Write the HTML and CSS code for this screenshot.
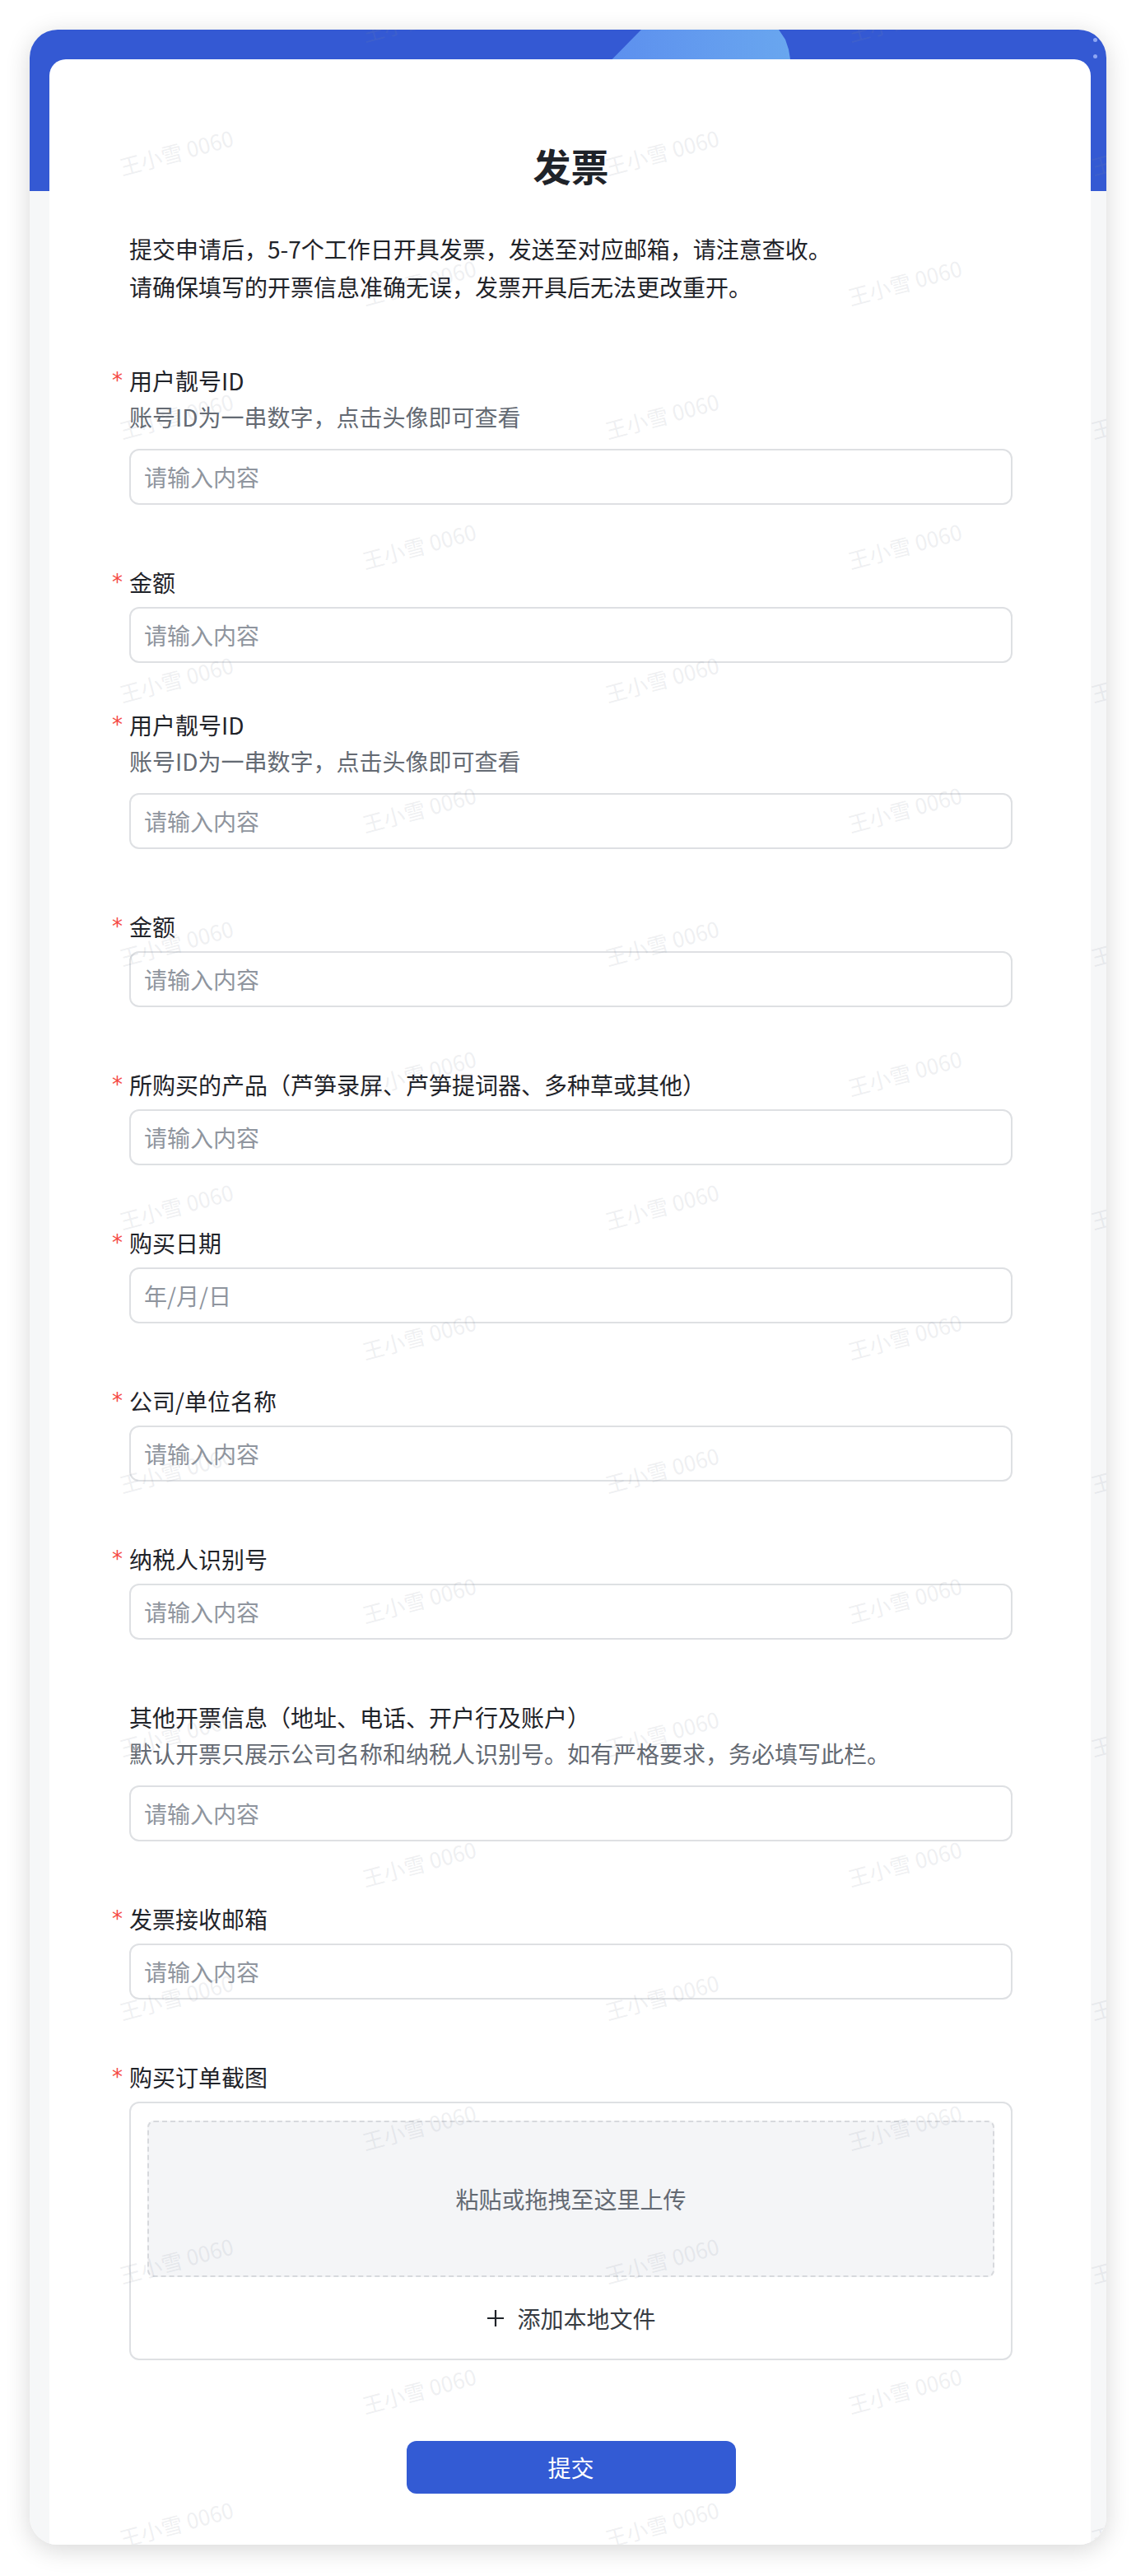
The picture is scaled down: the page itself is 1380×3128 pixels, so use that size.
FILE: index.html
```html
<!DOCTYPE html>
<html lang="zh-CN">
<head>
    <meta charset="UTF-8">
    <meta name="viewport" content="width=device-width, initial-scale=1.0">
    <title>发票</title>
    <link rel="stylesheet" href="styles.css">
</head>
<body>
    <div class="frame">
        <span class="head-shape"></span>
        <span class="scroll-dots"><i></i><i></i></span>

        <main class="card">
            <h1>发票</h1>
            <p class="intro">提交申请后，5-7个工作日开具发票，发送至对应邮箱，请注意查收。<br>请确保填写的开票信息准确无误，发票开具后无法更改重开。</p>

            <form class="form" onsubmit="return false">
                <div class="field">
                    <label class="label req">用户靓号ID</label>
                    <p class="hint">账号ID为一串数字，点击头像即可查看</p>
                    <input class="input" type="text" placeholder="请输入内容">
                </div>
                <div class="field">
                    <label class="label req">金额</label>
                    <input class="input" type="text" placeholder="请输入内容">
                </div>
                <div class="field tight">
                    <label class="label req">用户靓号ID</label>
                    <p class="hint">账号ID为一串数字，点击头像即可查看</p>
                    <input class="input" type="text" placeholder="请输入内容">
                </div>
                <div class="field">
                    <label class="label req">金额</label>
                    <input class="input" type="text" placeholder="请输入内容">
                </div>
                <div class="field">
                    <label class="label req">所购买的产品（芦笋录屏、芦笋提词器、多种草或其他）</label>
                    <input class="input" type="text" placeholder="请输入内容">
                </div>
                <div class="field">
                    <label class="label req">购买日期</label>
                    <input class="input" type="text" placeholder="年/月/日">
                </div>
                <div class="field">
                    <label class="label req">公司/单位名称</label>
                    <input class="input" type="text" placeholder="请输入内容">
                </div>
                <div class="field">
                    <label class="label req">纳税人识别号</label>
                    <input class="input" type="text" placeholder="请输入内容">
                </div>
                <div class="field">
                    <label class="label">其他开票信息（地址、电话、开户行及账户）</label>
                    <p class="hint">默认开票只展示公司名称和纳税人识别号。如有严格要求，务必填写此栏。</p>
                    <input class="input" type="text" placeholder="请输入内容">
                </div>
                <div class="field">
                    <label class="label req">发票接收邮箱</label>
                    <input class="input" type="text" placeholder="请输入内容">
                </div>
                <div class="field">
                    <label class="label req">购买订单截图</label>
                    <div class="upload">
                        <div class="drop-zone">粘贴或拖拽至这里上传</div>
                        <div class="add-file">
                            <svg width="24" height="24" viewBox="0 0 24 24"><path d="M12 2v20M2 12h20" stroke="#1f2329" stroke-width="2.2" fill="none"/></svg>
                            添加本地文件
                        </div>
                    </div>
                </div>

                <button class="submit" type="submit">提交</button>
            </form>
        </main>

        <!-- 水印层 -->
        <svg class="watermark" aria-hidden="true"></svg>
    </div>

    <script>
        // 水印：交错排列，列距 295，行距 320
        const wm = document.querySelector('.watermark');
        const ns = 'http://www.w3.org/2000/svg';
        for (let col = 0; col < 5; col++) {
            const x = 178 + col * 295;
            const start = col % 2 ? -14 : 148;
            for (let y = start; y < 3200; y += 320) {
                const t = document.createElementNS(ns, 'text');
                t.setAttribute('x', x);
                t.setAttribute('y', y);
                t.setAttribute('transform', `rotate(-15 ${x} ${y})`);
                t.textContent = '王小雪 0060';
                wm.appendChild(t);
            }
        }
    </script>
</body>
</html>
```

FILE: styles.css
```css
body {
    margin: 0;
    background: #fff;
    font-family: "Noto Sans CJK SC", "Noto Sans", sans-serif;
    color: #1f2329;
}
.frame {
    position: relative;
    width: 1308px;
    margin: 36px auto;
    padding: 36px 19px 0 24px;
    box-sizing: border-box;
    border-radius: 34px;
    overflow: hidden;
    background: linear-gradient(to bottom, #3459d3 196px, #f6f7f8 196px);
    box-shadow: 0 6px 30px rgba(0,0,0,0.16);
}
.head-shape {
    position: absolute;
    left: 680px;
    top: 0;
    width: 260px;
    height: 60px;
    background: linear-gradient(90deg, #5b8dee 0%, #6aa8ef 100%);
    clip-path: polygon(63px 0, 230px 0, 238px 12px, 242px 24px, 244px 36px, 245px 60px, 4px 60px);
}
.scroll-dots {
    position: absolute;
    right: 11px;
    top: 10px;
    display: flex;
    flex-direction: column;
    gap: 15px;
}
.scroll-dots i {
    width: 5px;
    height: 5px;
    border-radius: 50%;
    background: #8ea6f3;
}
.card {
    position: relative;
    background: #fff;
    border-radius: 20px 20px 0 0;
    padding: 96px 95px 62px 97px;
}
h1 {
    margin: 0;
    font-size: 46px;
    line-height: 64px;
    font-weight: 700;
    text-align: center;
}
.intro {
    margin: 47px 0 0;
    font-size: 28px;
    line-height: 46px;
}
.form {
    margin-top: 69px;
}
.field + .field {
    margin-top: 72px;
}
.field.tight {
    margin-top: 53px;
}
.label {
    display: block;
    font-size: 28px;
    line-height: 44px;
    margin-bottom: 8px;
}
.req::before {
    content: "*";
    display: inline-block;
    width: 21px;
    margin-left: -21px;
    font-family: "DejaVu Sans", sans-serif;
    font-size: 26px;
    line-height: 44px;
    vertical-align: top;
    color: #f54a45;
}
.hint {
    margin: -8px 0 17px;
    font-size: 28px;
    line-height: 44px;
    color: #646a73;
}
.input {
    display: block;
    width: 100%;
    height: 68px;
    box-sizing: border-box;
    border: 2px solid #dee0e3;
    border-radius: 12px;
    padding: 0 16px;
    font-family: inherit;
    font-size: 28px;
    color: #1f2329;
    outline: none;
}
.input::placeholder {
    color: #8f959e;
}
.upload {
    border: 2px solid #dee0e3;
    border-radius: 12px;
    padding: 21px 20px 0;
}
.drop-zone {
    height: 190px;
    box-sizing: border-box;
    border: 2px dashed #d7d9dd;
    border-radius: 8px;
    background: #f4f5f7;
    display: flex;
    align-items: center;
    justify-content: center;
    font-size: 28px;
    color: #646a73;
}
.add-file {
    height: 99px;
    display: flex;
    align-items: center;
    justify-content: center;
    gap: 14px;
    font-size: 28px;
    color: #373c43;
}
.submit {
    display: block;
    margin: 98px auto 0;
    width: 400px;
    height: 64px;
    border: none;
    border-radius: 12px;
    background: #335bd4;
    color: #fff;
    font-family: inherit;
    font-size: 28px;
    cursor: pointer;
}
.watermark {
    position: absolute;
    top: 0;
    left: 0;
    width: 100%;
    height: 100%;
    pointer-events: none;
}
.watermark text {
    font-family: "Noto Sans CJK SC", sans-serif;
    font-size: 26px;
    fill: rgba(130,140,155,0.14);
    text-anchor: middle;
    dominant-baseline: central;
}
```
